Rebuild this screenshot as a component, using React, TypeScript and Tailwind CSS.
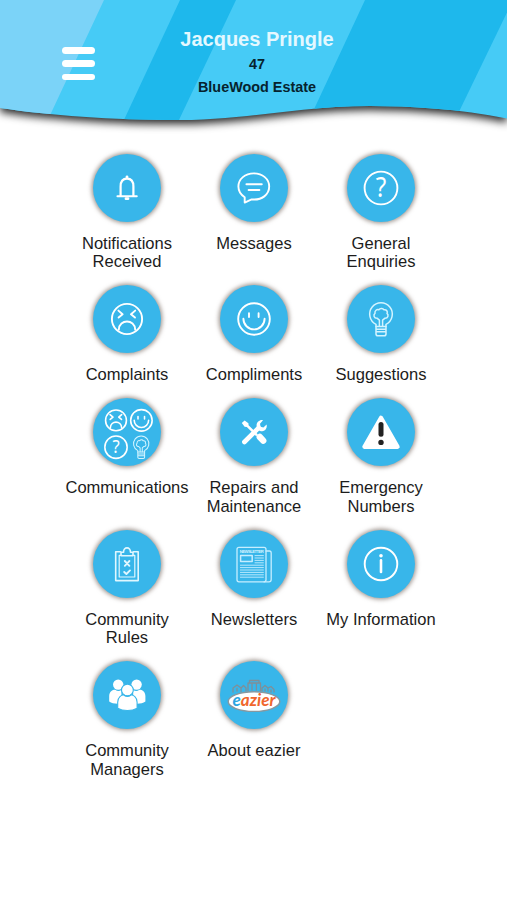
import type { ReactNode } from "react";

function Glyph({ children }: { children: ReactNode }) {
  return (
    <svg
      viewBox="-34 -34 68 68"
      className="size-[68px]"
      fill="none"
      stroke="#ffffff"
      strokeWidth="1.9"
      strokeLinecap="round"
      strokeLinejoin="round"
    >
      {children}
    </svg>
  );
}

// Shapes shared between the single icons and the combined one
function SadFace() {
  return (
    <g>
      <circle r="15.1" />
      <path d="M-8.6 -8.4L-4.4 -4.7L-8.4 -1.4M8.2 -8.4L4 -4.7L8 -1.4" />
      <path d="M-8.2 10.6C-7.8 -.2 7.8 -.2 8.2 10.6" />
    </g>
  );
}

function SmileFace() {
  return (
    <g>
      <circle r="15.8" />
      <path d="M-5 -5.8V-2M4.6 -5.8V-2" />
      <path d="M-10.6 -.2A10.6 10.6 0 0 0 10.6 -.2" />
    </g>
  );
}

function Question() {
  return (
    <g>
      <circle r="16.4" />
      <text
        y="9.2"
        textAnchor="middle"
        fill="#ffffff"
        stroke="none"
        fontSize="27"
        textLength="10.5"
        lengthAdjust="spacingAndGlyphs"
        fontFamily="'Noto Sans', 'Open Sans', sans-serif"
      >
        ?
      </text>
    </g>
  );
}

function Bulb() {
  return (
    <g stroke="#d3f4ff" strokeWidth="1.5">
      <path d="M-5 7.5V5.3A11.3 11.3 0 1 1 5 5.3V7.5Z" />
      <path d="M-1.6 7V1.2L-4 -.8C-7 -.8 -8 -4 -6 -5.6C-6.6 -8.5 -4 -10 -2.2 -9.2C-.8 -11.2 2.2 -10.8 2.8 -9.2C5.6 -9.8 7 -7.2 6 -5.6C8 -4 7 -.8 4 -.8L1.6 1.2V7" />
      <path d="M-5 10.2H5M-5 12.8H5M-5 7.5V15Q-5 16.8 -3 16.8H3Q5 16.8 5 15V7.5" />
    </g>
  );
}

const items = [
  {
    label: ["Notifications", "Received"],
    icon: (
      <Glyph>
        <path d="M-9.6 8.2H9.8" />
        <path d="M-6.4 8V-1.5C-6.4 -7 -4 -9.4 0 -9.4S6.4 -7 6.4 -1.5V8" strokeWidth="2.2" />
        <path d="M0 -11.2V-10.4M-1 10.7H1" strokeWidth="2.8" />
      </Glyph>
    ),
  },
  {
    label: ["Messages"],
    icon: (
      <Glyph>
        <path d="M-9.3 9.2V14.6L-2.4 11.4C8 12.6 15.2 6.4 15.2 -1.4C15.2 -9 8.5 -14.6 -.2 -14.6S-15.6 -9 -15.6 -1.4C-15.6 3 -13.2 6.8 -9.3 9.2Z" />
        <path d="M-7.6 -3.8H7.8M-5.4 2H5.4" />
      </Glyph>
    ),
  },
  { label: ["General", "Enquiries"], icon: <Glyph><Question /></Glyph> },
  { label: ["Complaints"], icon: <Glyph><SadFace /></Glyph> },
  { label: ["Compliments"], icon: <Glyph><SmileFace /></Glyph> },
  { label: ["Suggestions"], icon: <Glyph><Bulb /></Glyph> },
  {
    label: ["Communications"],
    icon: (
      <Glyph>
        <g transform="translate(-11 -11.6) scale(.69)" strokeWidth="2.3"><SadFace /></g>
        <g transform="translate(14.4 -11.6) scale(.68)" strokeWidth="2.3"><SmileFace /></g>
        <g transform="translate(-11 15.2) scale(.68)" strokeWidth="2.3"><Question /></g>
        <g transform="translate(14.2 15) scale(.68)"><Bulb /></g>
      </Glyph>
    ),
  },
  {
    label: ["Repairs and", "Maintenance"],
    icon: (
      <Glyph>
        <path d="M-9.6 10L4.6 -4.2" strokeWidth="4.6" />
        <path
          d="M9 -11.8C6 -12.6 2.6 -10 2.6 -6.6C2.6 -3 5.4 -.8 8.2 -.8C11.4 -.8 13.4 -4 12.6 -7.4L9.4 -4.4L6.6 -5.2L6 -8.2Z"
          fill="#ffffff"
          stroke="none"
        />
        <path d="M-12.2 -9L-9.4 -11.6L-5.6 -8.8L-5.4 -6.8L4 2.4L2.2 4.2L-7.2 -5L-9.4 -5.2Z" fill="#ffffff" stroke="none" />
        <path d="M5.8 5L9.2 8.6" strokeWidth="6.4" />
      </Glyph>
    ),
  },
  {
    label: ["Emergency", "Numbers"],
    icon: (
      <Glyph>
        <path d="M0 -14.2L16.6 14.8H-16.6Z" fill="#ffffff" strokeWidth="4.2" />
        <path d="M0 -7.4V2.2" stroke="#222222" strokeWidth="5" />
        <circle cy="10.4" r="2.7" fill="#222222" stroke="none" />
      </Glyph>
    ),
  },
  {
    label: ["Community", "Rules"],
    icon: (
      <Glyph>
        <g stroke="#e0f7ff" strokeWidth="1.6">
          <path d="M-6.5 -12.2H-11.3V16.6H11.2V-12.2H6.5" />
          <path d="M-5 -8.6H-7.8V13H7.8V-8.6H5" strokeWidth="1.2" />
          <path d="M-6 -8.2V-11.8H-3.4C-4 -17.6 4 -17.6 3.4 -11.8H6V-8.2Z" />
          <path d="M-2.2 -3L2.4 1.8M2.4 -3L-2.2 1.8M-2.8 8L-.6 10L3 6.4" strokeWidth="1.9" />
        </g>
      </Glyph>
    ),
  },
  {
    label: ["Newsletters"],
    icon: (
      <Glyph>
        <g stroke="#c6eeff" strokeWidth="1.3">
          <rect x="-17" y="-16.6" width="29" height="34.4" rx="2" />
          <path d="M12 -13H15.4Q17.2 -13 17.2 -11V15.6Q17.2 17.8 15 17.8H10" />
          <rect x="-13.4" y="-8.4" width="11.6" height="6" strokeWidth="1.5" />
          <path
            d="M1 -8.4H9.4M1 -6H9.4M1 -3.6H9.4M1 -1.2H9.4M-13.6 1.2H9.4M-13.6 3.6H9.4M-13.6 6H9.4M-13.6 8.4H9.4M-13.6 10.8H9.4M-13.6 13.2H9.4"
            strokeWidth=".9"
          />
        </g>
        <text
          x="-2.2"
          y="-11.2"
          textAnchor="middle"
          textLength="24"
          fill="#d3f4ff"
          stroke="none"
          fontSize="4.2"
          fontWeight="700"
          fontFamily="'Liberation Sans', sans-serif"
        >
          NEWSLETTER
        </text>
      </Glyph>
    ),
  },
  {
    label: ["My Information"],
    icon: (
      <Glyph>
        <circle r="16.3" />
        <circle cy="-8.2" r="1.8" fill="#ffffff" stroke="none" />
        <path d="M0 -3.6V8" strokeWidth="2.6" />
      </Glyph>
    ),
  },
  {
    label: ["Community", "Managers"],
    icon: (
      <Glyph>
        <g fill="#ffffff" stroke="none">
          <circle cx="-8.8" cy="-10.4" r="5.2" />
          <circle cx="9.6" cy="-10.4" r="5.2" />
          <path d="M-17.8 6.5V1C-17.8 -3.5 -14 -5.4 -11.8 -5.2C-9.5 -3.4 -7.5 -3.6 -5.6 -5V8.5C-11 9 -15 8.6 -17.8 6.5Z" />
          <path d="M18.4 6.5V1C18.4 -3.5 14.6 -5.4 12.4 -5.2C10.1 -3.4 8.1 -3.6 6.2 -5V8.5C11.6 9 15.6 8.6 18.4 6.5Z" />
        </g>
        <g fill="#ffffff" stroke="#38b6ea" strokeWidth="1.1">
          <circle cx=".4" cy="-5" r="5.9" />
          <path d="M-9.3 13.2V7.2C-9.3 2 -5.4 -.3 -3.2 0C-.9 1.8 1.7 1.8 4 0C6.2 -.3 10.1 2 10.1 7.2V13.2C5 16.2 -4.2 16.2 -9.3 13.2Z" />
        </g>
      </Glyph>
    ),
  },
  {
    label: ["About eazier"],
    icon: (
      <Glyph>
        <g stroke="#7f8f98" strokeWidth="1.3">
          <path d="M-21 -3V-7L-17 -10L-13 -7V-3M-13 -7L-10.5 -9.5L-8 -7V-4M-17 -6.5V-4" />
          <path d="M-6 -4V-12H-4.5V-14.5H5V-12H6.5V-4M-2 -11V-5M2.4 -11V-5M-4.5 -12H5" />
          <path d="M8 -4V-7L11 -9.5L14 -7V-4M14 -7L17 -8.5L20 -5.5V-3M11 -6V-4M17 -5V-3" />
        </g>
        <ellipse cx="0" cy="6.6" rx="25.8" ry="9.8" fill="#ffffff" stroke="#8798a0" strokeWidth="1.4" />
        <text
          x="0"
          y="11"
          textAnchor="middle"
          textLength="43"
          lengthAdjust="spacingAndGlyphs"
          fill="#f0662d"
          stroke="none"
          fontSize="16.5"
          fontWeight="700"
          fontStyle="italic"
          fontFamily="Lato, sans-serif"
        >
          <tspan fill="#2ba5e2">e</tspan>azier
        </text>
      </Glyph>
    ),
  },
];

function Header() {
  return (
    <header className="relative h-[141px]">
      <svg
        viewBox="0 0 507 141"
        className="absolute inset-0 h-[141px] w-[507px] drop-shadow-[0_4px_4px_rgba(0,0,0,0.85)]"
      >
        <clipPath id="wave">
          <path d="M-20 -20H527V122L507 118.5C460 109 410 106 370 106C300 106 245 120 180 120C110 120 50 115.5 0 108L-20 104Z" />
        </clipPath>
        <g clipPath="url(#wave)">
          <rect x="-20" y="-20" width="547" height="161" fill="#46cbf6" />
          <path d="M-20 -20H113.4L104 0L45 126H-20Z" fill="#7bd3f8" />
          <path d="M180 0H236L178 122H123Z" fill="#1eb8ec" />
          <path d="M365 0H513L455 120H309Z" fill="#1eb8ec" />
        </g>
      </svg>
      <div className="relative flex pt-[27px]">
        <button aria-label="Menu" className="ml-[62px] mt-5 flex h-[33px] w-[33px] flex-col justify-between">
          <span className="h-[6.5px] w-full rounded-full bg-white" />
          <span className="h-[6.5px] w-full rounded-full bg-white" />
          <span className="h-[6.5px] w-full rounded-full bg-white" />
        </button>
        <div className="ml-[62px] w-[200px] text-center font-bold text-[#06232e]">
          <h1 className="text-[20px] leading-6 text-[#e4f8ff]">Jacques Pringle</h1>
          <p className="mt-[2px] text-[14.4px] leading-[23px]">47</p>
          <p className="text-[14.4px] leading-[23px]">BlueWood Estate</p>
        </div>
      </div>
    </header>
  );
}

export default function App() {
  return (
    <div className="h-[900px] w-[507px] overflow-hidden bg-white font-['Liberation_Sans',Arial,sans-serif]">
      <Header />
      <main className="ml-[63.5px] grid w-[381px] grid-cols-3 gap-y-[13.2px] pt-[12.5px]">
        {items.map((item) => (
          <a key={item.label.join(" ")} className="flex flex-col items-center">
            <div className="flex size-[68px] items-center justify-center rounded-full bg-[#38b6ea] shadow-[0_0_4px_1.5px_rgba(100,85,75,0.6)]">
              {item.icon}
            </div>
            <div className="mt-[13px] whitespace-nowrap text-center text-[16.55px] leading-[18.7px] text-[#1c1c1c]">
              {item.label.map((line) => (
                <div key={line}>{line}</div>
              ))}
            </div>
          </a>
        ))}
      </main>
    </div>
  );
}
